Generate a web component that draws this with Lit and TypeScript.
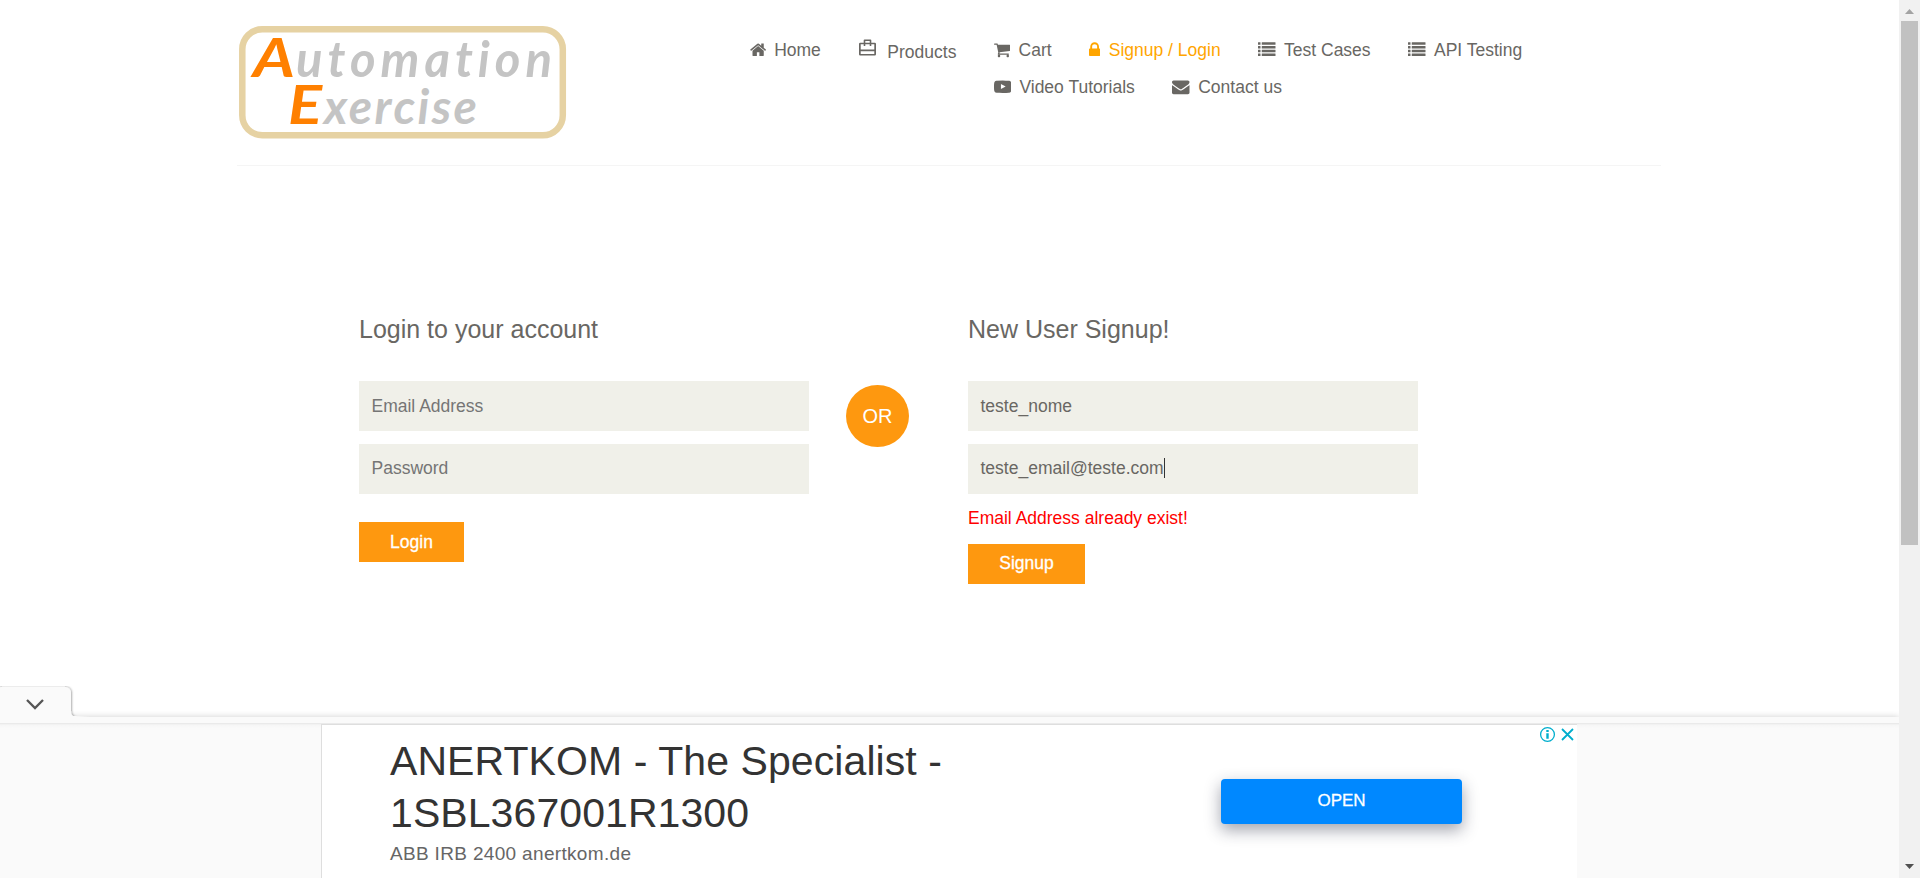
import { LitElement, html, css, svg } from "lit";
import { customElement } from "lit/decorators.js";

const home = svg`<path d="M1472 992v480q0 26-19 45t-45 19h-384v-384h-256v384h-384q-26 0-45-19t-19-45v-480q0-1 .5-3t.5-3l575-474 575 474q1 2 1 6zm223-69l-62 74q-8 9-21 11h-3q-13 0-21-7l-692-577-692 577q-12 8-24 7-13-2-21-11l-62-74q-8-10-7-23.5t11-21.5l719-599q32-26 76-26t76 26l244 204v-195q0-14 9-23t23-9h192q14 0 23 9t9 23v408l219 182q10 8 11 21.5t-7 23.5z"/>`;
const cart = svg`<path d="M704 1536q0 52-38 90t-90 38-90-38-38-90 38-90 90-38 90 38 38 90zm896 0q0 52-38 90t-90 38-90-38-38-90 38-90 90-38 90 38 38 90zm128-1088v512q0 24-16.500 42.500t-40.500 21.500l-1044 122q13 60 13 70 0 16-24 64h920q26 0 45 19t19 45-19 45-45 19h-1024q-26 0-45-19t-19-45q0-11 8-31.500t16-36 21.500-40 15.500-29.500l-177-823h-204q-26 0-45-19t-19-45 19-45 45-19h256q16 0 28.500 6.500t19.500 15.500 13 24.500 8 26 5.500 29.500 4.500 26h1201q26 0 45 19t19 45z"/>`;
const lock = svg`<path d="M640 768h512v-192q0-106-75-181t-181-75-181 75-75 181v192zm832 96v576q0 40-28 68t-68 28h-960q-40 0-68-28t-28-68v-576q0-40 28-68t68-28h32v-192q0-184 132-316t316-132 316 132 132 316v192h32q40 0 68 28t28 68z"/>`;
const list = svg`${[256, 640, 1024, 1408].map(
  (y) => svg`<rect x="0" y=${y - 128} width="256" height="256" rx="32"/><rect x="384" y=${y - 128} width="1408" height="256" rx="32"/>`
)}`;
const video = svg`<path d="M711 1128l484-250-484-253v503zm185-862q168 0 324.500 4.500t229.500 9.500l73 4q1 0 17 1.500t23 3 23.500 4.500 28.500 8 28 13 31 19.500 29 26.500q6 6 15.500 18.500t29 58.500 26.500 101q8 64 12.500 136.500t5.500 113.500v176q1 145-18 290-7 55-25 99.500t-32 61.500l-14 17q-14 15-29 26.500t-31 19-28 12.500-28.500 8-24 4.500-23 3-16.500 1.500q-251 19-627 19-207-2-359.500-6.500t-200.500-7.500l-49-4-36-4q-36-5-54.500-10t-51-21-56.500-41q-6-6-15.500-18.500t-29-58.500-26.500-101q-8-64-12.500-136.500t-5.500-113.500v-176q-1-145 18-290 7-55 25-99.500t32-61.500l14-17q14-15 29-26.500t31-19.500 28-13 28.500-8 23.500-4.500 23-3 17-1.500q251-18 627-18z"/>`;
const mail = svg`<path d="M1792 710v794q0 66-47 113t-113 47h-1472q-66 0-113-47t-47-113v-794q44 49 101 87 362 246 497 345 57 42 92.500 65.500t94.500 48 110 24.500h2q51 0 110-24.500t94.500-48 92.500-65.500q170-123 498-345 57-39 100-87zm0-294q0 79-49 151t-122 123q-376 261-468 325-10 7-42.500 31t-54 38.500-52 32.500-57.500 27-50 9h-2q-23 0-50-9t-57.500-27-52-32.500-54-38.500-42.500-31q-91-64-262-182.500t-205-142.500q-62-42-117-115.500t-55-136.500q0-78 41.500-130t118.500-52h1472q65 0 112.500 47t47.500 113z"/>`;

const icon = (shape: unknown, left: number, width: number) => html`<svg
  class="icon"
  width=${(width / 1792) * 17.5}
  height="17.5"
  viewBox="${left} 0 ${width} 1792"
>${shape}</svg>`;

@customElement("site-header")
class SiteHeader extends LitElement {
  static styles = css`
    :host { display: block; }
    .bar {
      display: flex;
      margin: 0 238px 0 237px;
      height: 165px;
      border-bottom: 1px solid #f5f5f5;
    }
    .logo { flex: none; margin-top: 25px; width: 331px; height: 115px; }
    .logo text { font-family: Lato, sans-serif; font-style: italic; font-weight: 700; font-variant-ligatures: none; }
    .nav {
      margin-left: 181.5px;
      padding-top: 31px;
      color: #696763;
      font-size: 17.5px;
    }
    .row { display: flex; gap: 37.5px; height: 37px; }
    .row.second { margin-left: 244px; }
    .item { display: flex; align-items: center; gap: 8.4px; height: 37px; white-space: nowrap; }
    .item.active { color: orange; }
    .label { line-height: 37px; padding-top: 1px; }
    .products { gap: 9px; }
    .products .label { padding-top: 5px; }
    .products .icon { margin-bottom: 4px; }
    .icon { display: block; fill: currentColor; }
  `;
  render() {
    return html`<header class="bar">
      <svg class="logo" viewBox="0 0 331 115">
        <rect x="5.300" y="4.300" width="320.500" height="106" rx="20" fill="#fff" stroke="#e6d2a3" stroke-width="6.500"/>
        <text x="16" y="52" font-size="54" fill="#ff8000" textLength="42" lengthAdjust="spacingAndGlyphs">A</text>
        <text x="59" y="52" font-size="49" fill="#c4c4c4" textLength="256" lengthAdjust="spacing">utomation</text>
        <text x="51" y="99" font-size="53" fill="#ff8000" textLength="34" lengthAdjust="spacingAndGlyphs">E</text>
        <text x="87" y="99" font-size="48" fill="#c4c4c4" textLength="153" lengthAdjust="spacing">xercise</text>
      </svg>
      <nav class="nav">
        <div class="row">
          <a class="item">${icon(home, 64, 1664)}<span class="label">Home</span></a>
          <a class="item products"><svg class="icon" width="20" height="20" viewBox="0 0 20 20"><path fill-rule="evenodd" d="M6.500 1.500h6q.8 0 .8.800v2.400h3.500q1.200 0 1.200 1.200v10.400q0 1.200-1.200 1.200h-14.600q-1.200 0-1.200-1.200v-10.400q0-1.200 1.200-1.200h3.500v-2.400q0-.8.800-.8zM7.300 3v1.700h4.400v-1.700zM2.700 6.300v5.200h13.600v-5.200h-3v1.700h-1.600v-1.700h-4.400v1.700h-1.600v-1.700zM2.700 13.200v2.700h13.600v-2.700z"/></svg><span class="label">Products</span></a>
          <a class="item">${icon(cart, 64, 1664)}<span class="label">Cart</span></a>
          <a class="item active">${icon(lock, 320, 1152)}<span class="label">Signup / Login</span></a>
          <a class="item">${icon(list, 0, 1792)}<span class="label">Test Cases</span></a>
          <a class="item">${icon(list, 0, 1792)}<span class="label">API Testing</span></a>
        </div>
        <div class="row second">
          <a class="item">${icon(video, 0, 1792)}<span class="label">Video Tutorials</span></a>
          <a class="item">${icon(mail, 0, 1792)}<span class="label">Contact us</span></a>
        </div>
      </nav>
    </header>`;
  }
}

@customElement("account-forms")
class AccountForms extends LitElement {
  static styles = css`
    :host { display: block; }
    .forms { display: flex; align-items: flex-start; padding: 314px 0 0 359px; margin-top: -166px; }
    .form { width: 450px; }
    h2 { margin: 0 0 37px; font-size: 25px; line-height: 30px; font-weight: 400; color: #696763; white-space: nowrap; }
    .field {
      display: flex; align-items: center;
      height: 50px; margin-bottom: 13px; padding-left: 12.5px; box-sizing: border-box;
      background: #f0f0e9; color: #696763; font-size: 17.5px;
    }
    .field + .field { padding-bottom: 2px; }
    .hint { color: #757575; }
    .caret { width: 1px; height: 20px; background: #333; }
    .error { margin: 0; height: 37px; line-height: 22px; box-sizing: border-box; color: #f00; font-size: 17.5px; }
    .btn {
      display: block; height: 40px; border: 0; padding: 0; background: #fe980f; color: #fff;
      font: 500 17.500px/40px "Liberation Sans", Arial, sans-serif;
      -webkit-text-stroke: 0.3px #fff;
    }
    .login { width: 105px; margin-top: 28px; }
    .signup { width: 117px; line-height: 38px; padding-bottom: 2px; }
    .or {
      width: 63px; height: 62px; margin: 71px 59px 0 37px; border-radius: 50%;
      background: #fe980f; color: #fff; font-size: 20px; line-height: 62px; text-align: center;
    }
  `;
  render() {
    return html`<section class="forms">
      <div class="form">
        <h2>Login to your account</h2>
        <div class="field hint">Email Address</div>
        <div class="field hint">Password</div>
        <button class="btn login">Login</button>
      </div>
      <div class="or">OR</div>
      <div class="form">
        <h2>New User Signup!</h2>
        <div class="field">teste_nome</div>
        <div class="field">teste_email@teste.com<span class="caret"></span></div>
        <p class="error">Email Address already exist!</p>
        <button class="btn signup">Signup</button>
      </div>
    </section>`;
  }
}

@customElement("anchor-ad")
class AnchorAd extends LitElement {
  static styles = css`
    :host { display: block; }
    .tab { display: block; width: 90px; height: 37px; margin-bottom: -6px; position: relative; }
    .strip { height: 6px; background: #fafafa; box-shadow: 0 0 6px rgba(0, 0, 0, 0.2); }
    .body { height: 155px; background: linear-gradient(#e6e6e6, #f6f6f6 2px, #fafafa 5px); padding: 1px 0 0 321px; box-sizing: border-box; position: relative; }
    .ad {
      display: flex; width: 1256px; height: 154px; box-sizing: border-box;
      background: #fff; border: solid #dedede; border-width: 1px 0 0 1px;
    }
    .copy { width: 831px; padding: 10px 0 0 68px; box-sizing: border-box; white-space: nowrap; }
    .title { font-size: 41px; line-height: 52px; color: #333; letter-spacing: 0.08px; }
    .sub { font-size: 19px; line-height: 26px; margin-top: 2px; color: #666; letter-spacing: 0.33px; }
    .open {
      width: 241px; height: 45px; margin: 54px 0 0 68px; border-radius: 4px; background: #0088ff; color: #fff;
      font: 400 17px/43px "Liberation Sans", Arial, sans-serif; text-align: center;
      -webkit-text-stroke: 0.3px #fff;
      box-shadow: 0 6px 16px rgba(30, 35, 60, 0.42);
    }
    .marks { margin: 1px 0 0 77px; width: 38px; height: 18px; }
  `;
  render() {
    return html`<svg class="tab" viewBox="0 0 90 37">
        <defs><filter id="soft" x="-10%" y="-20%" width="130%" height="140%"><feDropShadow dx="0.5" dy="0" stdDeviation="1.300" flood-color="#000" flood-opacity="0.450"/></filter></defs>
        <path d="M-4 31V4Q-4 .8 5 .8H64Q71 .8 71 7.500V25Q71 31 77 31Z" fill="#fafafa" filter="url(#soft)"/>
        <path d="M0 30H75L90 31V37H0Z" fill="#fafafa"/>
        <path d="M27 13.500l8 8 8-8" transform="translate(0 0.500)" fill="none" stroke="#555" stroke-width="2.300"/>
      </svg>
      <div class="strip"></div>
      <div class="body">
        <div class="ad">
          <div class="copy">
            <div class="title">ANERTKOM - The Specialist -<br />1SBL367001R1300</div>
            <div class="sub">ABB IRB 2400 anertkom.de</div>
          </div>
          <div class="open">OPEN</div>
          <svg class="marks" viewBox="0 0 38 18" fill="none" stroke="#00aecd">
            <circle cx="8.500" cy="8.500" r="6.900" stroke-width="1.300"/>
            <path d="M8.500 7.200v5.600M8.500 4v2" stroke-width="2.400"/>
            <path d="M23 3l11 11M34 3l-11 11" stroke-width="1.800"/>
          </svg>
        </div>
      </div>`;
  }
}

@customElement("app-root")
class AppRoot extends LitElement {
  static styles = css`
    :host {
      display: flex; width: 1920px; height: 878px; overflow: hidden; background: #fff;
      font-family: "Liberation Sans", Arial, sans-serif;
    }
    .page { width: 1899px; height: 878px; display: flex; flex-direction: column; overflow: hidden; }
    .grow { flex: 1; }
    .scroll { width: 21px; background: #f1f1f1; display: flex; flex-direction: column; align-items: center; }
    .scroll svg { display: block; fill: #505050; }
    .scroll .up { fill: #a3a3a3; }
    .thumb { width: 17px; height: 524px; background: #c1c1c1; margin-bottom: auto; }
  `;
  render() {
    return html`<main class="page">
        <site-header></site-header>
        <account-forms></account-forms>
        <div class="grow"></div>
        <anchor-ad></anchor-ad>
      </main>
      <aside class="scroll">
        <svg class="up" width="21" height="21"><path d="M6 14h9l-4.500-5z"/></svg>
        <div class="thumb"></div>
        <svg width="21" height="21"><path d="M6 7h9l-4.500 5z"/></svg>
      </aside>`;
  }
}
